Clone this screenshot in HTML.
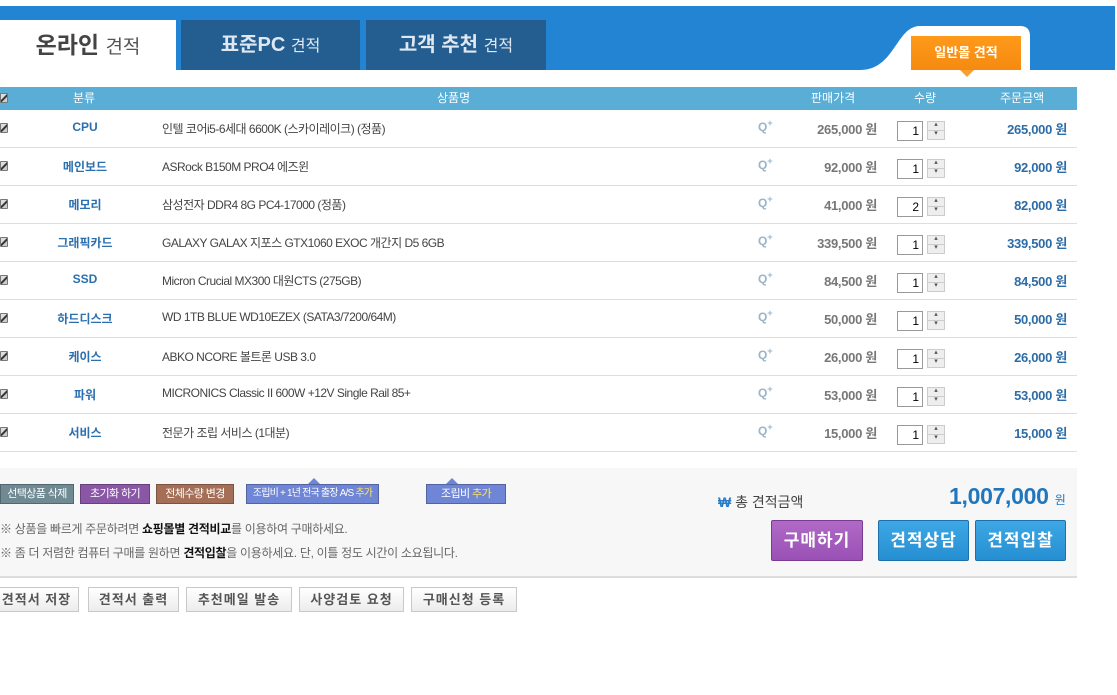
<!DOCTYPE html>
<html><head><meta charset="utf-8"><style>
*{margin:0;padding:0;box-sizing:border-box}
body{width:1117px;height:695px;background:#fff;position:relative;overflow:hidden;font-family:"Liberation Sans","Noto Sans CJK KR",sans-serif;font-size:12px;color:#333}
.a{position:absolute}
.tab{position:absolute;top:20px;height:50px;line-height:50px;text-align:center;font-size:20px;font-weight:bold;color:#dfe8f0;background:#245e91}
.tab span{font-size:16px;font-weight:normal}
.hd{position:absolute;top:87px;left:0;width:1077px;height:23px;background:#5aaed6;color:#fff;font-size:12px;line-height:23px}
.row{position:absolute;left:0;width:1077px;height:38px;border-bottom:1px solid #dedede}
.cb{position:absolute;left:0;top:13px;width:8px;height:10px;background:linear-gradient(135deg,#ddd 0,#ddd 40%,#333 45%,#333 60%,#ccc 65%);border:1px solid #777;border-radius:1px}
.cat{position:absolute;left:40px;top:10px;width:90px;text-align:center;color:#2a6fb0;font-weight:bold;font-size:12px}
.nm{position:absolute;left:162px;top:10px;color:#444;font-size:12px;letter-spacing:-0.5px}
.q{position:absolute;left:758px;top:8px;color:#9ab4c8;font-size:12px;font-weight:bold}
.q sup{font-size:9px}
.pr{position:absolute;right:200px;top:9px;color:#777;font-weight:bold;font-size:13px;letter-spacing:-0.3px}
.in{position:absolute;left:897px;top:11px;width:26px;height:20px;border:1px solid #999;background:#fff;text-align:right;padding-right:3px;font-size:12px;line-height:18px;color:#000}
.sp{position:absolute;left:927px;top:11px;width:18px;height:19px;border:1px solid #ccc;background:#eee}
.sp:after{content:"";position:absolute;left:0;right:0;top:8px;border-top:1px solid #ccc}
.sp:before{content:"▴\A▾";white-space:pre;position:absolute;left:0;right:0;top:-2px;font-size:7px;line-height:9px;text-align:center;color:#555}
.tot{position:absolute;right:10px;top:9px;color:#2c6ca8;font-weight:bold;font-size:13px;letter-spacing:-0.3px}
.sb{position:absolute;top:484px;height:20px;line-height:18px;color:#fff;font-size:11px;text-align:center;border:1px solid rgba(0,0,0,.25);letter-spacing:-0.6px;white-space:nowrap;overflow:hidden}
.bb{position:absolute;top:587px;height:25px;line-height:23px;border:1px solid #c8c8c8;background:linear-gradient(#fff,#ececec);font-size:13px;font-weight:bold;color:#555;text-align:center;letter-spacing:1px}
.big{position:absolute;top:520px;height:41px;line-height:39px;color:#fff;font-size:17px;font-weight:bold;text-align:center;border-radius:2px;letter-spacing:1px}
</style></head><body>
<div class="a" style="left:0;top:6px;width:1115px;height:64px;background:#2484d4"></div>
<svg class="a" style="left:840px;top:24px" width="200" height="48"><path d="M20 46 C55 46 56 2 80 2 L180 2 Q190 2 190 12 L190 48 L20 48 Z" fill="#fff"/></svg>
<div class="tab" style="left:0;width:176px;background:#fff;color:#444;font-size:23px">온라인 <span style="font-size:19px;color:#555">견적</span></div>
<div class="tab" style="left:181px;width:179px">표준PC <span>견적</span></div>
<div class="tab" style="left:366px;width:180px">고객 추천 <span>견적</span></div>
<div class="a" style="left:911px;top:36px;width:110px;height:34px;background:linear-gradient(#ff9a1a,#f58a10);color:#fff;font-weight:bold;font-size:13px;text-align:center;line-height:34px">일반몰 견적</div>
<div class="a" style="left:960px;top:70px;width:0;height:0;border-left:7px solid transparent;border-right:7px solid transparent;border-top:7px solid #f7a030"></div>
<div class="hd"><div class="cb" style="top:6px"></div><span class="a" style="left:73px">분류</span><span class="a" style="left:437px">상품명</span><span class="a" style="left:811px">판매가격</span><span class="a" style="left:914px">수량</span><span class="a" style="left:1000px">주문금액</span></div>

<div class="row" style="top:110px"><div class="cb"></div><div class="cat">CPU</div><div class="nm">인텔 코어i5-6세대 6600K (스카이레이크) (정품)</div><div class="q">Q<sup>+</sup></div><div class="pr">265,000 원</div><div class="in">1</div><div class="sp"></div><div class="tot">265,000 원</div></div>
<div class="row" style="top:148px"><div class="cb"></div><div class="cat">메인보드</div><div class="nm">ASRock B150M PRO4 에즈윈</div><div class="q">Q<sup>+</sup></div><div class="pr">92,000 원</div><div class="in">1</div><div class="sp"></div><div class="tot">92,000 원</div></div>
<div class="row" style="top:186px"><div class="cb"></div><div class="cat">메모리</div><div class="nm">삼성전자 DDR4 8G PC4-17000 (정품)</div><div class="q">Q<sup>+</sup></div><div class="pr">41,000 원</div><div class="in">2</div><div class="sp"></div><div class="tot">82,000 원</div></div>
<div class="row" style="top:224px"><div class="cb"></div><div class="cat">그래픽카드</div><div class="nm">GALAXY GALAX 지포스 GTX1060 EXOC 개간지 D5 6GB</div><div class="q">Q<sup>+</sup></div><div class="pr">339,500 원</div><div class="in">1</div><div class="sp"></div><div class="tot">339,500 원</div></div>
<div class="row" style="top:262px"><div class="cb"></div><div class="cat">SSD</div><div class="nm">Micron Crucial MX300 대원CTS (275GB)</div><div class="q">Q<sup>+</sup></div><div class="pr">84,500 원</div><div class="in">1</div><div class="sp"></div><div class="tot">84,500 원</div></div>
<div class="row" style="top:300px"><div class="cb"></div><div class="cat">하드디스크</div><div class="nm">WD 1TB BLUE WD10EZEX (SATA3/7200/64M)</div><div class="q">Q<sup>+</sup></div><div class="pr">50,000 원</div><div class="in">1</div><div class="sp"></div><div class="tot">50,000 원</div></div>
<div class="row" style="top:338px"><div class="cb"></div><div class="cat">케이스</div><div class="nm">ABKO NCORE 볼트론 USB 3.0</div><div class="q">Q<sup>+</sup></div><div class="pr">26,000 원</div><div class="in">1</div><div class="sp"></div><div class="tot">26,000 원</div></div>
<div class="row" style="top:376px"><div class="cb"></div><div class="cat">파워</div><div class="nm">MICRONICS Classic II 600W +12V Single Rail 85+</div><div class="q">Q<sup>+</sup></div><div class="pr">53,000 원</div><div class="in">1</div><div class="sp"></div><div class="tot">53,000 원</div></div>
<div class="row" style="top:414px"><div class="cb"></div><div class="cat">서비스</div><div class="nm">전문가 조립 서비스 (1대분)</div><div class="q">Q<sup>+</sup></div><div class="pr">15,000 원</div><div class="in">1</div><div class="sp"></div><div class="tot">15,000 원</div></div>

<div class="a" style="left:0;top:468px;width:1077px;height:110px;background:#f7f7f7;border-bottom:2px solid #ddd"></div>
<div class="sb" style="left:0;width:74px;background:#6f8a93">선택상품 삭제</div>
<div class="sb" style="left:80px;width:70px;background:#8a57a6">초기화 하기</div>
<div class="sb" style="left:156px;width:78px;background:#a56f57">전체수량 변경</div>
<div class="sb" style="left:246px;width:133px;background:#6f86d6;font-size:10px;letter-spacing:-0.8px">조립비 + 1년 전국 출장 A/S <span style="color:#ffe36a">추가</span></div>
<div class="a" style="left:308px;top:478px;border-left:6px solid transparent;border-right:6px solid transparent;border-bottom:6px solid #6f86d6"></div>
<div class="sb" style="left:426px;width:80px;background:#6f86d6">조립비 <span style="color:#ffe36a">추가</span></div>
<div class="a" style="left:446px;top:478px;border-left:6px solid transparent;border-right:6px solid transparent;border-bottom:6px solid #6f86d6"></div>
<div class="a" style="left:0;top:520px;color:#666;font-size:12px;letter-spacing:-0.3px">※ 상품을 빠르게 주문하려면 <b style="color:#111">쇼핑몰별 견적비교</b>를 이용하여 구매하세요.</div>
<div class="a" style="left:0;top:544px;color:#666;font-size:12px;letter-spacing:-0.3px">※ 좀 더 저렴한 컴퓨터 구매를 원하면 <b style="color:#111">견적입찰</b>을 이용하세요. 단, 이틀 정도 시간이 소요됩니다.</div>
<div class="a" style="left:718px;top:492px;font-size:14px;color:#444"><b style="color:#2a7ac8">₩</b> 총 견적금액</div>
<div class="a" style="left:949px;top:483px;font-size:23px;font-weight:bold;color:#2176be;letter-spacing:-0.3px">1,007,000 <span style="font-size:12px;font-weight:normal">원</span></div>
<div class="big" style="left:771px;width:92px;background:linear-gradient(#b06ac6,#9a50b5);border:1px solid #7a3c92">구매하기</div>
<div class="big" style="left:878px;width:91px;background:linear-gradient(#3ea7e5,#258fd2);border:1px solid #1d70a8">견적상담</div>
<div class="big" style="left:975px;width:91px;background:linear-gradient(#3ea7e5,#258fd2);border:1px solid #1d70a8">견적입찰</div>
<div class="bb" style="left:-6px;width:85px">견적서 저장</div>
<div class="bb" style="left:88px;width:91px">견적서 출력</div>
<div class="bb" style="left:186px;width:106px">추천메일 발송</div>
<div class="bb" style="left:299px;width:105px">사양검토 요청</div>
<div class="bb" style="left:411px;width:106px">구매신청 등록</div>
</body></html>
